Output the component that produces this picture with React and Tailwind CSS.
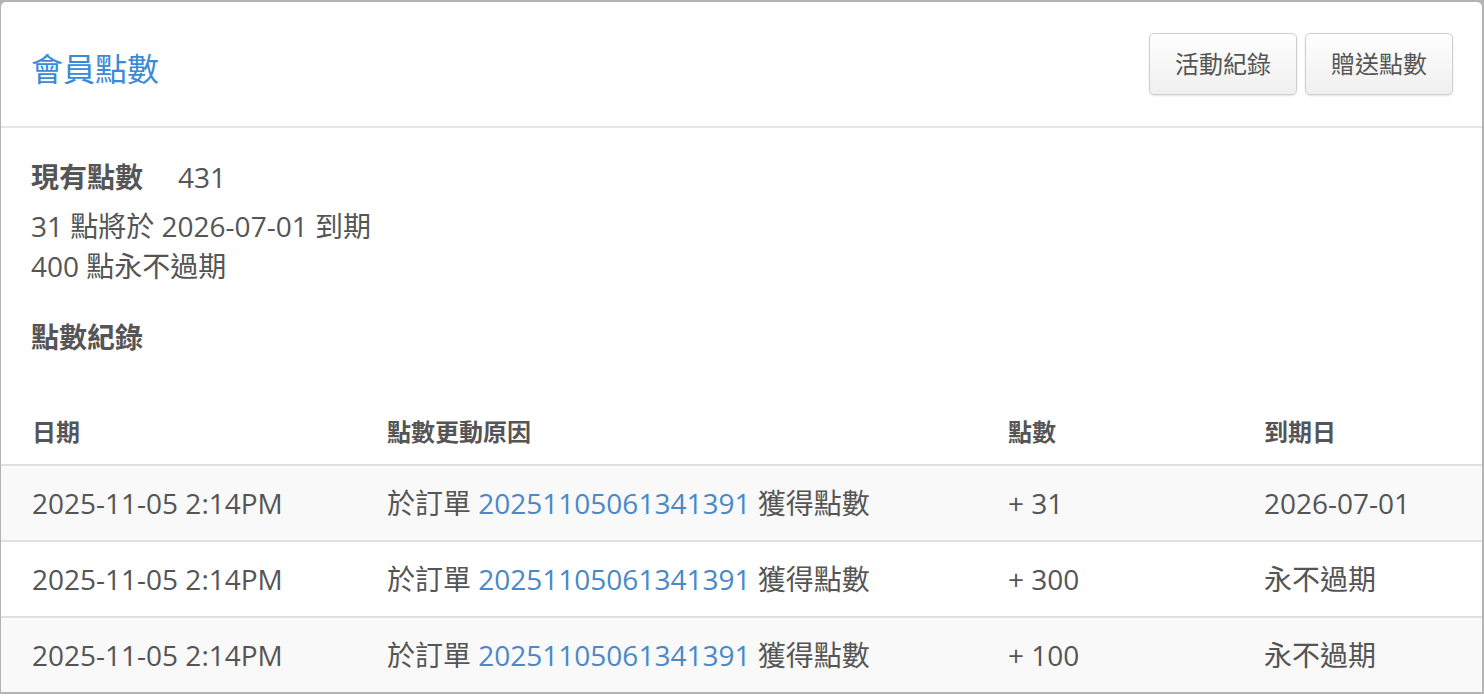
const records = [
  { date: "2025-11-05 2:14PM", order: "20251105061341391", points: "+ 31", expires: "2026-07-01" },
  { date: "2025-11-05 2:14PM", order: "20251105061341391", points: "+ 300", expires: "永不過期" },
  { date: "2025-11-05 2:14PM", order: "20251105061341391", points: "+ 100", expires: "永不過期" },
];

const cols = "grid grid-cols-[355px_621px_256px_1fr]";

const ActionButton = ({ children }) => (
  <button className="rounded-[5px] border border-[#cfcfcf] bg-gradient-to-b from-white to-[#efefef] px-[25px] py-[13px] text-[24px] leading-[34px] text-[#555] shadow-[0_1px_2px_rgba(0,0,0,0.12)]">
    {children}
  </button>
);

export default function App() {
  return (
    <div className="h-[694px] bg-[#b4b4b4] pl-[1px] pr-[2px] pt-[2px] font-['Open_Sans','Noto_Sans_CJK_TC',sans-serif] text-[#555]">
      <div className="h-[690px] overflow-hidden rounded-t-[5px] bg-white">
        {/* Header */}
        <header className="flex h-[126px] items-center justify-between border-b-2 border-[#e6e6e6] pl-[30px] pr-[29px]">
          <h1 className="pt-[10px] text-[32px] leading-[40px] text-[#3b8ad8]">會員點數</h1>
          <div className="flex gap-[8px]">
            <ActionButton>活動紀錄</ActionButton>
            <ActionButton>贈送點數</ActionButton>
          </div>
        </header>

        {/* Balance */}
        <section className="px-[30px] pt-[29px] text-[28px] leading-[40px]">
          <p>
            <span className="font-bold">現有點數</span>
            <span className="ml-[35px]">431</span>
          </p>
          <p className="mt-[9px]">31 點將於 2026-07-01 到期</p>
          <p>400 點永不過期</p>
          <h2 className="mt-[31px] font-bold">點數紀錄</h2>
        </section>

        {/* Records table */}
        <div>
          <div className={`${cols} border-b-2 border-[#e0e0e0] pb-[15px] pt-[58px] text-[24px] font-bold leading-[34px]`}>
            <div className="pl-[31px]">日期</div>
            <div className="pl-[31px]">點數更動原因</div>
            <div className="pl-[31px]">點數</div>
            <div className="pl-[31px]">到期日</div>
          </div>
          {records.map((r, i) => (
            <div
              key={i}
              className={`${cols} py-[17px] text-[28px] leading-[40px] ${i % 2 === 0 ? "bg-[#f9f9f9]" : "bg-white"} ${i < records.length - 1 ? "border-b-2 border-[#e0e0e0]" : ""}`}
            >
              <div className="pl-[31px]">{r.date}</div>
              <div className="pl-[31px]">
                於訂單 <a className="text-[#4a88c7]">{r.order}</a> 獲得點數
              </div>
              <div className="pl-[31px]">{r.points}</div>
              <div className="pl-[31px]">{r.expires}</div>
            </div>
          ))}
        </div>
      </div>
    </div>
  );
}
